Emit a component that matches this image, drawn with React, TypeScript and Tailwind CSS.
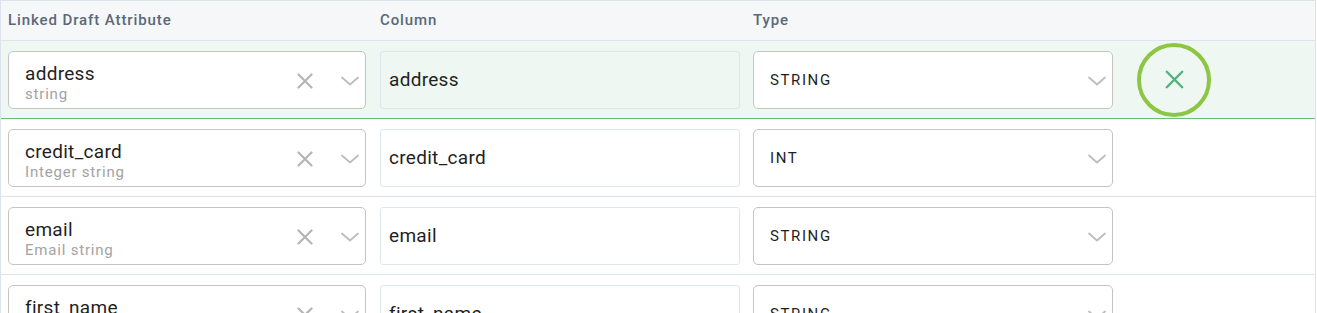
import React from "react";

const Chevron = ({ className = "" }: { className?: string }) => (
  <svg width="18" height="10" viewBox="0 0 18 10" className={className} fill="none">
    <path d="M1 1.5 L9 8.5 L17 1.5" stroke="#bdbdbd" strokeWidth="1.8" strokeLinecap="round" strokeLinejoin="round" />
  </svg>
);

const Cross = ({ color = "#b5b5b5", size = 16, sw = 2.2 }: { color?: string; size?: number; sw?: number }) => (
  <svg width={size} height={size} viewBox="0 0 16 16" fill="none">
    <path d="M1.5 1.5 L14.5 14.5 M14.5 1.5 L1.5 14.5" stroke={color} strokeWidth={sw} strokeLinecap="round" />
  </svg>
);

type Row = { name: string; sub: string; col: string; type: string };

const rows: Row[] = [
  { name: "address", sub: "string", col: "address", type: "STRING" },
  { name: "credit_card", sub: "Integer string", col: "credit_card", type: "INT" },
  { name: "email", sub: "Email string", col: "email", type: "STRING" },
  { name: "first_name", sub: "string", col: "first_name", type: "STRING" },
];

export default function App() {
  return (
    <div className="w-[1317px] h-[313px] overflow-hidden bg-white" style={{ fontFamily: "Roboto, 'Liberation Sans', sans-serif" }}>
      <div className="w-[1316px] border-t border-l border-r border-[#dde3ec]">
        <div className="grid grid-cols-[372px_373px_373px_1fr] h-[40px] bg-[#f5f7f9] border-b border-[#dde3ec] items-center text-[15px] tracking-[0.9px] font-medium text-[#5c6878]">
          <div className="pl-[7px]">Linked Draft Attribute</div>
          <div className="pl-[7px]">Column</div>
          <div className="pl-[7px]">Type</div>
          <div />
        </div>
        {rows.map((r, i) => {
          const active = i === 0;
          return (
            <div
              key={r.name}
              className={
                "grid grid-cols-[372px_373px_373px_1fr] h-[78px] items-start border-b " +
                (active ? "bg-[#eef7f1] border-[#6cbb7c]" : "bg-white border-[#dde3ec]")
              }
            >
              <div className="pl-[7px] pt-[10px]">
                <div className="w-[358px] h-[58px] rounded-[5px] border border-[#c4c4c4] bg-white flex items-center pl-[16px] pr-[6px]">
                  <div className="flex-1 flex flex-col pt-[5px]">
                    <span className="text-[19px] tracking-[0.3px] text-[#1f1f1f] leading-[22px]">{r.name}</span>
                    <span className="text-[15px] text-[#a3a3a3] tracking-[0.8px] leading-[18px]">{r.sub}</span>
                  </div>
                  <div className="flex items-center gap-[28px] pt-[1px]">
                    <Cross size={16} />
                    <Chevron />
                  </div>
                </div>
              </div>
              <div className="pl-[7px] pt-[10px]">
                <div
                  className={
                    "w-[360px] h-[58px] rounded-[3px] border border-[#dfe5ec] flex items-center pl-[8px] text-[19px] tracking-[0.3px] text-[#1f1f1f] " +
                    (active ? "bg-[#eef7f1]" : "bg-white")
                  }
                >
                  {r.col}
                </div>
              </div>
              <div className="pl-[7px] pt-[10px]">
                <div className="w-[360px] h-[58px] rounded-[5px] border border-[#c4c4c4] bg-white flex items-center pl-[16px] pr-[6px]">
                  <span className="flex-1 text-[15px] text-[#1f1f1f] tracking-[1.6px]">{r.type}</span>
                  <Chevron className="mt-[2px]" />
                </div>
              </div>
              <div className="h-full flex items-center pl-[18px]">
                {active && (
                  <div className="w-[74px] h-[74px] rounded-full border-[4px] border-[#8dc641] flex items-center justify-center">
                    <Cross color="#4db37a" size={19} sw={2} />
                  </div>
                )}
              </div>
            </div>
          );
        })}
      </div>
    </div>
  );
}
